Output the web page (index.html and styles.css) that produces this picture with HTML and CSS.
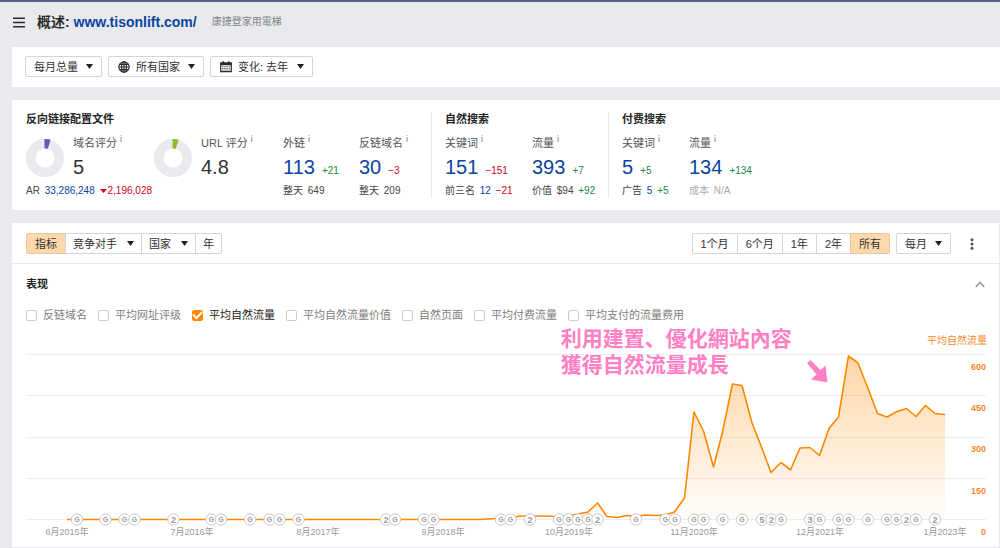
FILE: index.html
```html
<!DOCTYPE html>
<html lang="zh-CN">
<head>
<meta charset="utf-8">
<meta name="viewport" content="width=device-width, initial-scale=1">
<title>概述: www.tisonlift.com/</title>
<link rel="stylesheet" href="styles.css">
</head>
<body>
<header class="topbar">
  <button class="icon-button" type="button" aria-label="菜单">
    <svg width="12" height="11" viewBox="0 0 12 11"><path d="M0 1.25h12M0 5.5h12M0 9.75h12" stroke="#2b2b2b" stroke-width="1.6"/></svg>
  </button>
  <h1 class="title">概述: <a href="#">www.tisonlift.com/</a></h1>
  <span class="subtitle">康捷登家用電梯</span>
</header>

<main class="panels">
  <section class="panel filters">
    <div class="picker">
      <select aria-label="总量"><option>每月总量</option></select>
      <svg class="caret" width="7" height="5" viewBox="0 0 7 5"><path d="M0 0h7L3.5 5z"/></svg>
    </div>
    <div class="picker with-icon">
      <svg class="lead" width="12" height="12" viewBox="0 0 12 12" fill="none" stroke="#2b2b2b" stroke-width="1.1"><circle cx="6" cy="6" r="5.2"/><ellipse cx="6" cy="6" rx="2.4" ry="5.2"/><path d="M6 .8v10.4M.8 6h10.4M1.6 3.4h8.8M1.6 8.6h8.8"/></svg>
      <select aria-label="国家"><option>所有国家</option></select>
      <svg class="caret" width="7" height="5" viewBox="0 0 7 5"><path d="M0 0h7L3.5 5z"/></svg>
    </div>
    <div class="picker with-icon">
      <svg class="lead" width="12" height="12" viewBox="0 0 12 12"><path d="M.7 2.2h10.6v8.4H.7z" fill="#fff" stroke="#2b2b2b" stroke-width="1.2"/><path d="M.5 1.6h11v2.6H.5zM2.5 .3h1.6v2H2.5zM7.9 .3h1.6v2H7.9z" fill="#2b2b2b"/><path d="M2.3 5.7h7.6M2.3 7.4h7.6M2.3 9.1h7.6" stroke="#2b2b2b" stroke-width="1" stroke-dasharray="1.1 1"/></svg>
      <select aria-label="变化"><option>变化: 去年</option></select>
      <svg class="caret" width="7" height="5" viewBox="0 0 7 5"><path d="M0 0h7L3.5 5z"/></svg>
    </div>
  </section>

  <section class="panel stats">
    <div class="group">
      <h2>反向链接配置文件</h2>
      <div class="metrics backlinks">
        <div class="metric rated">
          <svg class="donut" width="38" height="38" viewBox="-19 -19 38 38"><circle r="14.2" fill="none" stroke="#e8eaed" stroke-width="9.5"/><path d="M-.5 -19A19 19 0 0 1 5.6 -18.2L2.8 -9.3A9.5 9.5 0 0 0 -.5 -9.5z" fill="#6b57b8"/></svg>
          <div class="label">域名评分<sup>i</sup></div>
          <div class="value">5</div>
          <div class="foot">AR <a href="#">33,286,248</a> <span class="down"><svg width="7" height="4" viewBox="0 0 7 4"><path d="M0 0h7L3.5 4z" fill="#d0021b"/></svg>2,196,028</span></div>
        </div>
        <div class="metric rated">
          <svg class="donut" width="38" height="38" viewBox="-19 -19 38 38"><circle r="14.2" fill="none" stroke="#e8eaed" stroke-width="9.5"/><path d="M-.5 -19A19 19 0 0 1 5.6 -18.2L2.8 -9.3A9.5 9.5 0 0 0 -.5 -9.5z" fill="#8dbb2d"/></svg>
          <div class="label">URL 评分<sup>i</sup></div>
          <div class="value">4.8</div>
        </div>
        <div class="metric">
          <div class="label">外链<sup>i</sup></div>
          <div class="value"><a href="#">113</a><span class="up">+21</span></div>
          <div class="foot">整天 <span>649</span></div>
        </div>
        <div class="metric">
          <div class="label">反链域名<sup>i</sup></div>
          <div class="value"><a href="#">30</a><span class="down">−3</span></div>
          <div class="foot">整天 <span>209</span></div>
        </div>
      </div>
    </div>
    <div class="group">
      <h2>自然搜索</h2>
      <div class="metrics organic">
        <div class="metric">
          <div class="label">关键词<sup>i</sup></div>
          <div class="value"><a href="#">151</a><span class="down">−151</span></div>
          <div class="foot">前三名 <a href="#">12</a> <span class="down">−21</span></div>
        </div>
        <div class="metric">
          <div class="label">流量<sup>i</sup></div>
          <div class="value"><a href="#">393</a><span class="up">+7</span></div>
          <div class="foot">价值 <span>$94</span> <span class="up">+92</span></div>
        </div>
      </div>
    </div>
    <div class="group">
      <h2>付费搜索</h2>
      <div class="metrics paid">
        <div class="metric">
          <div class="label">关键词<sup>i</sup></div>
          <div class="value"><a href="#">5</a><span class="up">+5</span></div>
          <div class="foot">广告 <a href="#">5</a> <span class="up">+5</span></div>
        </div>
        <div class="metric">
          <div class="label">流量<sup>i</sup></div>
          <div class="value"><a href="#">134</a><span class="up">+134</span></div>
          <div class="foot muted">成本 <span>N/A</span></div>
        </div>
      </div>
    </div>
  </section>

  <section class="panel report">
    <div class="toolbar">
      <div class="segments tabs">
        <button type="button" class="active">指标</button>
        <button type="button">竞争对手<svg class="caret" width="7" height="5" viewBox="0 0 7 5"><path d="M0 0h7L3.5 5z"/></svg></button>
        <button type="button">国家<svg class="caret" width="7" height="5" viewBox="0 0 7 5"><path d="M0 0h7L3.5 5z"/></svg></button>
        <button type="button">年</button>
      </div>
      <div class="range">
        <div class="segments">
          <button type="button">1个月</button>
          <button type="button">6个月</button>
          <button type="button">1年</button>
          <button type="button">2年</button>
          <button type="button" class="active">所有</button>
        </div>
        <div class="picker compact">
          <select aria-label="周期"><option>每月</option></select>
          <svg class="caret" width="7" height="5" viewBox="0 0 7 5"><path d="M0 0h7L3.5 5z"/></svg>
        </div>
        <button class="icon-button more" type="button" aria-label="更多">
          <svg width="4" height="12" viewBox="0 0 4 12" fill="#555"><circle cx="2" cy="1.8" r="1.5"/><circle cx="2" cy="6" r="1.5"/><circle cx="2" cy="10.2" r="1.5"/></svg>
        </button>
      </div>
    </div>

    <div class="body">
      <div class="heading">
        <h2>表现</h2>
        <button class="icon-button" type="button" aria-label="收起">
          <svg width="10" height="7" viewBox="0 0 10 7"><path d="M.8 6L5 1.5 9.2 6" fill="none" stroke="#999" stroke-width="1.6"/></svg>
        </button>
      </div>
      <div class="checks">
        <label><input type="checkbox">反链域名</label>
        <label><input type="checkbox">平均网址评级</label>
        <label><input type="checkbox" checked>平均自然流量</label>
        <label><input type="checkbox">平均自然流量价值</label>
        <label><input type="checkbox">自然页面</label>
        <label><input type="checkbox">平均付费流量</label>
        <label><input type="checkbox">平均支付的流量费用</label>
      </div>
      <div class="chart">
        <svg viewBox="26 330 960 210" role="img" aria-label="平均自然流量">
          <defs>
            <linearGradient id="fade" x1="0" y1="0" x2="0" y2="1"><stop offset="0" stop-color="#ff8800" stop-opacity=".34"/><stop offset="1" stop-color="#ff8800" stop-opacity=".02"/></linearGradient>
            <g id="dot"><circle r="5.7" fill="#fff" stroke="#c8c8c8"/></g>
            <g id="g"><use href="#dot"/><text y="2.5">G</text></g>
            <g id="n2"><use href="#dot"/><text class="num" y="3">2</text></g>
            <g id="n3"><use href="#dot"/><text class="num" y="3">3</text></g>
            <g id="n5"><use href="#dot"/><text class="num" y="3">5</text></g>
          </defs>
          <path class="grid" d="M26 354.5H986M26 395.5H986M26 437.5H986M26 478.5H986M26 519.5H986"/>
          <path fill="url(#fade)" d="M67 519.5H480L495 518.5 510 518 520 516H540L562 516.5 578 514 588 512 597.5 503 607 516.5 617 517.5 627 515.5 637 516 646 515 656 515.5 665 515 674.5 512 684.5 498 694 412 703.5 431 713.5 467 722.5 432 732.5 384 742 385.5 752 423 761.5 447 771 472.5 781 462.5 790.5 470 800 448 810 447.5 819.5 455.5 829 428.5 838.5 417 848.5 356 858 363 868 388.5 877.5 413.5 887 417 897 411.5 906.5 408.5 916 416.5 925.5 405.5 935 413.5 945 414.5V519.5z"/>
          <path class="line" d="M67 519.5H480L495 518.5 510 518 520 516H540L562 516.5 578 514 588 512 597.5 503 607 516.5 617 517.5 627 515.5 637 516 646 515 656 515.5 665 515 674.5 512 684.5 498 694 412 703.5 431 713.5 467 722.5 432 732.5 384 742 385.5 752 423 761.5 447 771 472.5 781 462.5 790.5 470 800 448 810 447.5 819.5 455.5 829 428.5 838.5 417 848.5 356 858 363 868 388.5 877.5 413.5 887 417 897 411.5 906.5 408.5 916 416.5 925.5 405.5 935 413.5 945 414.5"/>
          <g class="marks">
            <use href="#g" x="77" y="519.5"/><use href="#g" x="105.5" y="519.5"/><use href="#g" x="124.5" y="519.5"/><use href="#g" x="134.5" y="519.5"/><use href="#n2" x="173.5" y="519.5"/><use href="#g" x="211.5" y="519.5"/><use href="#g" x="221" y="519.5"/><use href="#g" x="250" y="519.5"/><use href="#g" x="269.5" y="519.5"/><use href="#g" x="279.5" y="519.5"/><use href="#g" x="298.5" y="519.5"/>
            <use href="#n2" x="386" y="519.5"/><use href="#g" x="395" y="519.5"/><use href="#g" x="424" y="519.5"/><use href="#g" x="433.5" y="519.5"/><use href="#g" x="501" y="519.5"/><use href="#g" x="510.5" y="519.5"/><use href="#n2" x="530" y="519.5"/><use href="#g" x="559" y="519.5"/><use href="#g" x="568.5" y="519.5"/><use href="#g" x="578" y="519.5"/><use href="#g" x="588" y="519.5"/><use href="#n2" x="597.5" y="519.5"/><use href="#g" x="636" y="519.5"/><use href="#g" x="665.5" y="519.5"/><use href="#g" x="675" y="519.5"/>
            <use href="#g" x="694" y="519.5"/><use href="#g" x="703.5" y="519.5"/><use href="#g" x="722.5" y="519.5"/><use href="#g" x="742" y="519.5"/><use href="#n5" x="762" y="519.5"/><use href="#n2" x="771.5" y="519.5"/><use href="#g" x="781" y="519.5"/><use href="#n3" x="810" y="519.5"/><use href="#g" x="819.5" y="519.5"/><use href="#g" x="838.5" y="519.5"/><use href="#g" x="848.5" y="519.5"/><use href="#g" x="868" y="519.5"/><use href="#g" x="887" y="519.5"/><use href="#g" x="896.5" y="519.5"/><use href="#n2" x="906.5" y="519.5"/><use href="#g" x="916" y="519.5"/><use href="#n2" x="935" y="519.5"/>
          </g>
          <g class="dates">
            <text x="67" y="535">6月2015年</text><text x="192" y="535">7月2016年</text><text x="318" y="535">8月2017年</text><text x="443" y="535">9月2018年</text><text x="569" y="535">10月2019年</text><text x="694" y="535">11月2020年</text><text x="820" y="535">12月2021年</text><text x="945" y="535">1月2023年</text>
          </g>
          <g class="scale">
            <text class="name" x="987" y="344">平均自然流量</text><text x="986" y="370">600</text><text x="986" y="411">450</text><text x="986" y="452">300</text><text x="986" y="494">150</text><text x="986" y="535">0</text>
          </g>
          <path fill="#ff80c4" d="M807 363L810.5 360 820.5 370 825.5 365.5 827.5 382.5 811 379.5 816.5 374.5z"/>
        </svg>
        <p class="note">利用建置、優化網站內容<br>獲得自然流量成長</p>
      </div>
    </div>
  </section>
</main>
</body>
</html>
```
FILE: styles.css
```css
* { box-sizing: border-box; }
body {
  margin: 0;
  border-top: 2px solid #56648c;
  background: #e9eaed;
  color: #333;
  font: 11px/14px "Liberation Sans", "Noto Sans CJK SC", sans-serif;
}
h1, h2, p { margin: 0; }
h2 { font-size: 11px; line-height: 14px; color: #222; }
a { color: #0b44a0; text-decoration: none; }
button, select, input { margin: 0; font: inherit; color: inherit; }
svg { display: block; flex: none; }
.icon-button { display: flex; padding: 0; border: 0; background: none; }

.topbar { display: flex; align-items: center; padding: 10px 13px 15px; }
.title { margin-left: 12px; font-size: 14px; line-height: 20px; color: #2b2b2b; }
.subtitle { margin-left: 15px; font-size: 10px; color: #858585; }

.panels { display: grid; gap: 13px; padding-left: 12px; }
.panel { background: #fff; }

.filters { display: flex; gap: 6px; padding: 9px 13px 10px; }
.picker {
  display: grid;
  grid-template-columns: 1fr 15px;
  align-items: center;
  height: 21px;
  border: 1px solid #d5d5d5;
  border-radius: 2px;
  background: #fff;
}
.picker.with-icon { grid-template-columns: 27px 1fr 15px; }
.picker > * { grid-row: 1; }
.picker select {
  grid-column: 1 / -1;
  height: 19px;
  padding: 0 23px 0 8px;
  border: 0;
  background: none;
  appearance: none;
}
.picker.with-icon select { padding-left: 27px; }
.picker svg { pointer-events: none; }
.picker .lead { grid-column: 1; margin-left: 9px; }
.picker .caret { grid-column: -2; }
.caret { fill: #222; }

.stats { display: flex; padding: 12px 14px; }
.group + .group { padding-left: 13px; border-left: 1px solid #e8e8e8; }
.metrics { display: grid; margin-top: 10px; }
.backlinks { grid-template-columns: 128px 129px 76px 72px; }
.organic { grid-template-columns: 87px 76px; }
.paid { grid-template-columns: 67px 80px; }
.metric { display: grid; grid-template-rows: 14px 24px 14px; row-gap: 5px; align-content: start; white-space: nowrap; }
.rated { grid-template-columns: 38px 1fr; column-gap: 9px; }
.donut { grid-row: 1 / 3; align-self: center; }
.rated .foot { grid-column: 1 / -1; }
.label { color: #555; }
.label sup { margin-left: 3px; font-size: 9px; line-height: 0; color: #777; }
.value { font-size: 20px; line-height: 24px; }
.value span { margin-left: 7px; font-size: 10px; }
.foot { font-size: 10px; color: #444; }
.foot > * { margin-left: 2px; }
.foot svg { display: inline-block; margin-right: 1px; vertical-align: 1px; }
.up { color: #23893f; }
.down { color: #d0021b; }
.foot.muted { color: #aaa; }

.report { margin-right: 1px; }
.toolbar { display: flex; justify-content: space-between; padding: 10px 13px 9px 14px; border-bottom: 1px solid #e8e8e8; }
.segments, .range { display: flex; }
.segments button {
  display: flex;
  align-items: center;
  gap: 10px;
  height: 21px;
  padding: 0 8px;
  border: 1px solid #d5d5d5;
  background: #fff;
}
.segments button + button { margin-left: -1px; }
.segments button:first-child { border-radius: 2px 0 0 2px; }
.segments button:last-child { border-radius: 0 2px 2px 0; }
.segments .active { background: #ffd9ae; border-color: #ebc59b; }
.tabs button { padding: 0 7px; }
.tabs .active { padding: 0 8px; }
.picker.compact { margin-left: 6px; }
.more { align-items: center; margin: 0 12px 0 19px; }

.body { padding: 13px 13px 7px 14px; }
.heading { display: flex; align-items: center; justify-content: space-between; padding-right: 1px; }
.checks { display: flex; flex-wrap: wrap; gap: 11px; margin-top: 17px; color: #808080; }
.checks label { display: flex; align-items: center; gap: 6px; }
.checks label:has(:checked) { color: #222; }
.checks input { width: 11px; height: 11px; border: 1px solid #ccc; border-radius: 2px; background: #fff; appearance: none; }
.checks input:checked { display: grid; place-items: center; border-color: #ff8800; background: #ff8800; }
.checks input:checked::after {
  content: "";
  width: 7px;
  height: 4px;
  border: solid #fff;
  border-width: 0 0 2px 2px;
  transform: translateY(-1px) rotate(-45deg);
}

.chart { position: relative; margin-top: 8px; }
.chart > svg { width: 100%; height: auto; overflow: visible; }
.grid { stroke: #ededed; }
.line { fill: none; stroke: #ff8800; stroke-width: 1.6; stroke-linejoin: round; }
.chart text { font-size: 9px; text-anchor: middle; fill: #999; }
.chart defs text { font-size: 7px; font-weight: bold; }
.chart defs .num { font-size: 9px; }
.chart .scale text { text-anchor: end; font-weight: bold; fill: #f58a2c; }
.chart .scale .name { font-size: 10px; font-weight: normal; }
.note {
  position: absolute;
  top: -4px;
  left: 55.7%;
  color: #ff80c4;
  font: bold 21px/26px "Liberation Sans", "Noto Sans CJK TC", sans-serif;
}
```
